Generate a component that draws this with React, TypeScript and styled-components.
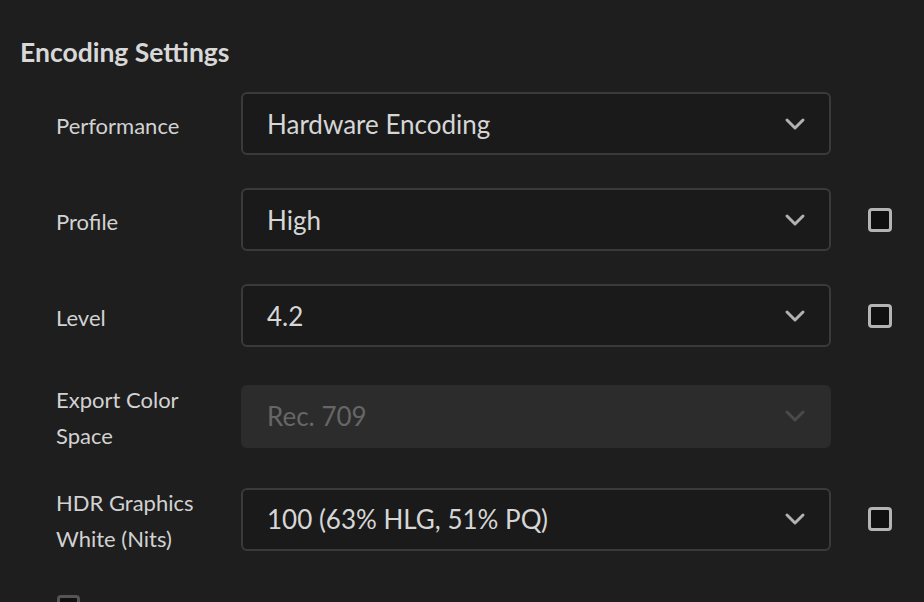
import styled, { createGlobalStyle } from 'styled-components'

const GlobalStyle = createGlobalStyle`
  html, body {
    margin: 0;
    padding: 0;
    background: #1e1e1e;
    overflow: hidden;
  }
  body {
    font-family: Lato, "Open Sans", sans-serif;
    color: #d4d4d4;
  }
`

interface Setting {
  label: string[]
  value: string
  disabled?: boolean
  checkbox?: boolean
}

const settings: Setting[] = [
  { label: ['Performance'], value: 'Hardware Encoding' },
  { label: ['Profile'], value: 'High', checkbox: true },
  { label: ['Level'], value: '4.2', checkbox: true },
  { label: ['Export Color', 'Space'], value: 'Rec. 709', disabled: true },
  {
    label: ['HDR Graphics', 'White (Nits)'],
    value: '100 (63% HLG, 51% PQ)',
    checkbox: true,
  },
]

const Panel = styled.div`
  width: 924px;
  height: 602px;
  padding: 34px 0 0 20px;
  box-sizing: border-box;
  overflow: hidden;
`

const Title = styled.h2`
  margin: 0;
  font-size: 26.5px;
  line-height: 36px;
  font-weight: 700;
  color: #d8d8d8;
`

const Rows = styled.div`
  display: flex;
  flex-direction: column;
  gap: 33px;
  margin-top: 22px;
  padding-left: 36px;
`

const Row = styled.div<{ tight?: boolean }>`
  display: flex;
  align-items: center;
  margin-top: ${({ tight }) => (tight ? '-2px' : '0')};
`

const Label = styled.div`
  width: 185px;
  font-size: 22px;
  line-height: 36px;
  color: #d2d2d2;
  transform: translateY(2px);
`

const Select = styled.div<{ disabled?: boolean }>`
  width: 590px;
  height: 63px;
  box-sizing: border-box;
  display: flex;
  align-items: center;
  justify-content: space-between;
  padding: 0 23px 0 24px;
  border-radius: 6px;
  border: 2px solid ${({ disabled }) => (disabled ? '#2c2c2c' : '#3a3a3a')};
  background: ${({ disabled }) => (disabled ? '#2c2c2c' : '#1a1a1a')};
  color: ${({ disabled }) => (disabled ? '#666666' : '#d6d6d6')};
  font-size: 26px;
`

const Chevron = styled.svg<{ disabled?: boolean }>`
  width: 22px;
  height: 14px;
  stroke: ${({ disabled }) => (disabled ? '#4a4a4a' : '#b2b2b2')};
`

const Checkbox = styled.div`
  width: 24px;
  height: 24px;
  box-sizing: border-box;
  margin-left: 37px;
  border: 3px solid #b4b4b4;
  border-radius: 4px;
  background: #111111;
`

const BottomCheck = styled(Checkbox)`
  margin: 7px 0 0 1px;
  width: 23px;
  height: 23px;
  border-color: #555555;
`

export default function App() {
  return (
    <Panel>
      <GlobalStyle />
      <Title>Encoding Settings</Title>
      <Rows>
        {settings.map((s, i) => (
          <Row key={s.value} tight={i === 4}>
            <Label>
              {s.label.map((l) => (
                <div key={l}>{l}</div>
              ))}
            </Label>
            <Select disabled={s.disabled}>
              <span>{s.value}</span>
              <Chevron disabled={s.disabled} viewBox="0 0 22 14" fill="none">
                <path
                  d="M3 3l8 8 8-8"
                  strokeWidth="3"
                  strokeLinecap="round"
                  strokeLinejoin="round"
                />
              </Chevron>
            </Select>
            {s.checkbox && <Checkbox />}
          </Row>
        ))}
        <Row>
          <BottomCheck />
        </Row>
      </Rows>
    </Panel>
  )
}
